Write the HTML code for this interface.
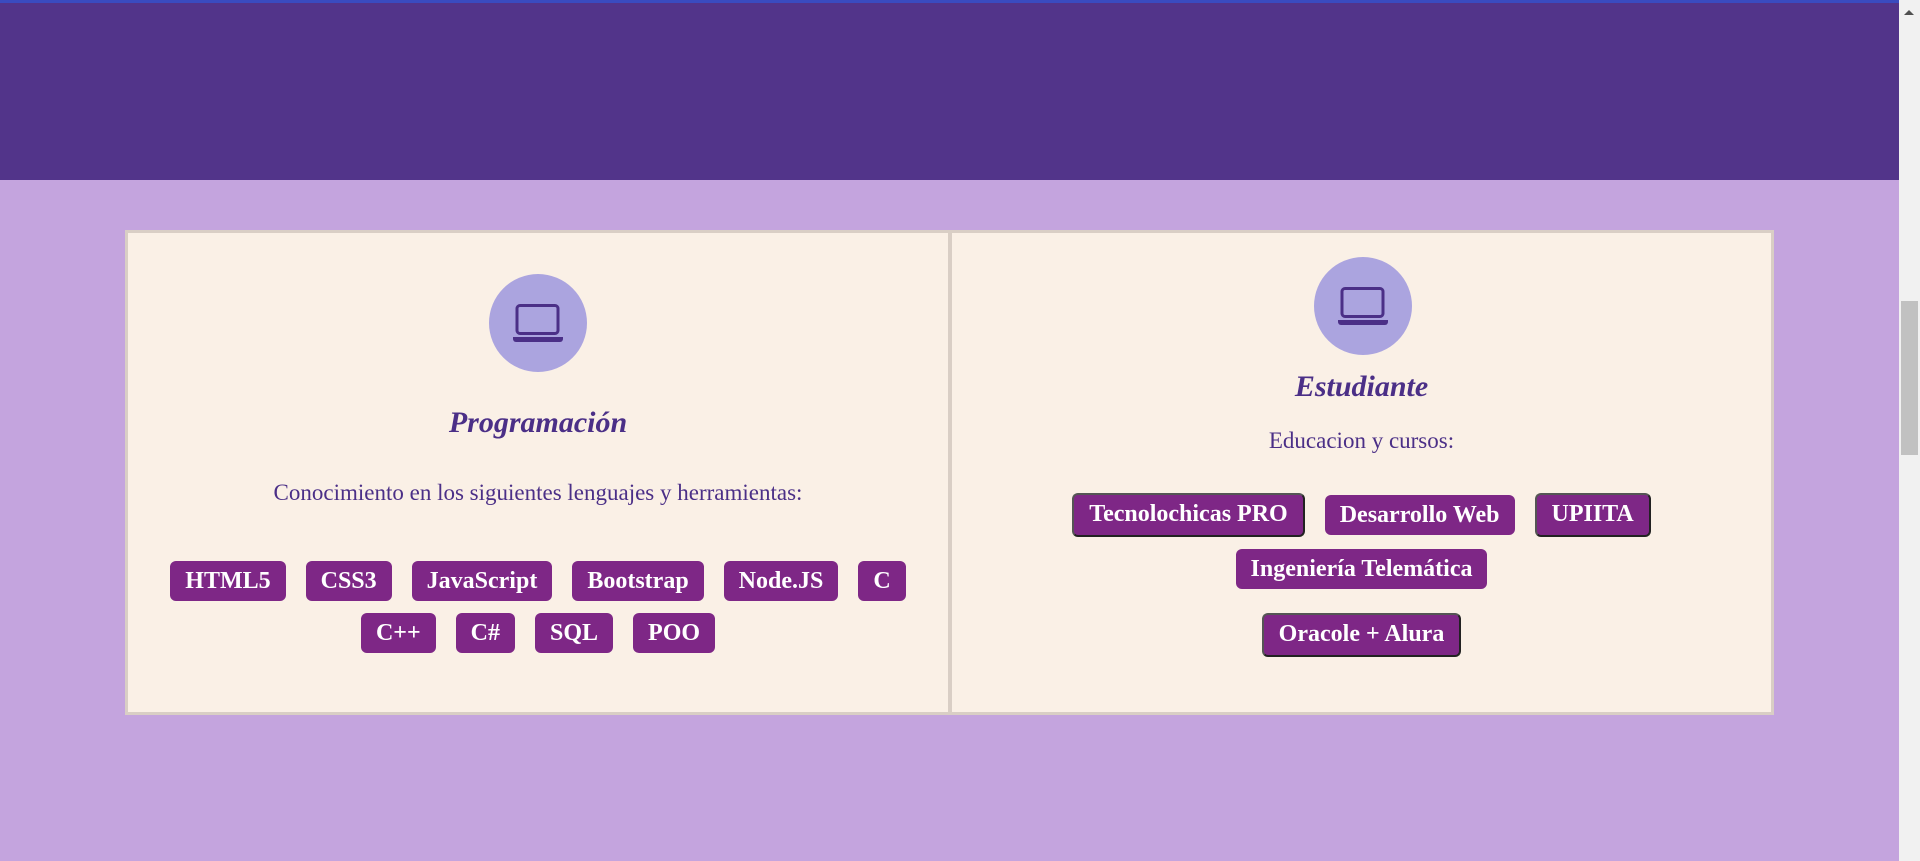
<!DOCTYPE html>
<html><head><meta charset="utf-8"><style>
*{margin:0;padding:0;box-sizing:border-box}
body{width:1920px;height:861px;overflow:hidden;background:#c4a4de;position:relative;font-family:"Liberation Serif",serif}
.top{position:absolute;left:0;top:0;width:1899px;height:180px;background:#52348a;border-top:3px solid #3a4bbf}
.sb{position:absolute;left:1899px;top:0;width:21px;height:861px;background:#f1f1f1}
.thumb{position:absolute;left:2px;top:301px;width:17px;height:154px;background:#c1c1c1}
.arr{position:absolute;left:5px;top:10px;width:0;height:0;border-left:5px solid transparent;border-right:5px solid transparent;border-bottom:5px solid #505050}
.card{position:absolute;top:230px;height:485px;background:#faf0e6;border:3px solid #d9cec5}
.circle{position:absolute;width:98px;height:98px;border-radius:50%;background:#aba4df}
.circle svg{position:absolute;left:24px;top:30px}
h2{position:absolute;left:0;right:0;text-align:center;font-family:"Liberation Serif",serif;font-style:italic;font-weight:bold;font-size:30px;color:#4b2f87;line-height:36px}
p{position:absolute;left:0;right:0;text-align:center;font-size:23px;color:#4b2f87;line-height:26px}
.row{position:absolute;left:0;right:0;display:flex;justify-content:center;gap:20px}
.b{height:40px;line-height:40px;padding:0 15px;background:#7e2786;color:#fff;font-weight:bold;font-size:24px;border-radius:6px;white-space:nowrap}
.b.k{border:2px solid #222;border-top-color:#555;border-left-color:#555;line-height:38px;height:44px}
</style></head><body>
<div class="top"></div>
<div class="sb"><div class="arr"></div><div class="thumb"></div></div>

<div class="card" style="left:125px;width:826px">
 <div class="circle" style="left:361px;top:41px"><svg width="50" height="40" viewBox="0 0 50 40"><rect x="4" y="1.5" width="41" height="28" rx="3" fill="none" stroke="#4b2f87" stroke-width="3"/><path d="M0 33h50v2a3 3 0 0 1-3 3H3a3 3 0 0 1-3-3z" fill="#4b2f87"/></svg></div>
 <h2 style="top:172px">Programación</h2>
 <p style="top:247px">Conocimiento en los siguientes lenguajes y herramientas:</p>
 <div class="row" style="top:328px"><span class="b">HTML5</span><span class="b">CSS3</span><span class="b">JavaScript</span><span class="b">Bootstrap</span><span class="b">Node.JS</span><span class="b">C</span></div>
 <div class="row" style="top:380px"><span class="b">C++</span><span class="b">C#</span><span class="b">SQL</span><span class="b">POO</span></div>
</div>

<div class="card" style="left:949px;width:825px">
 <div class="circle" style="left:362px;top:24px"><svg width="50" height="40" viewBox="0 0 50 40"><rect x="4" y="1.5" width="41" height="28" rx="3" fill="none" stroke="#4b2f87" stroke-width="3"/><path d="M0 33h50v2a3 3 0 0 1-3 3H3a3 3 0 0 1-3-3z" fill="#4b2f87"/></svg></div>
 <h2 style="top:136px">Estudiante</h2>
 <p style="top:195px">Educacion y cursos:</p>
 <div class="row" style="top:260px;align-items:center"><span class="b k">Tecnolochicas PRO</span><span class="b">Desarrollo Web</span><span class="b k">UPIITA</span></div>
 <div class="row" style="top:316px"><span class="b">Ingeniería Telemática</span></div>
 <div class="row" style="top:380px"><span class="b k">Oracole + Alura</span></div>
</div>
</body></html>
